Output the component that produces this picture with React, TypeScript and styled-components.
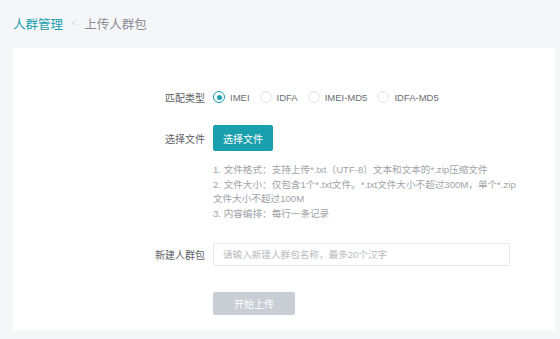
import React, { useState } from "react";
import styled, { createGlobalStyle } from "styled-components";

const GlobalStyle = createGlobalStyle`
  html, body {
    margin: 0;
    padding: 0;
    background: #f5f6f8;
    font-family: "Liberation Sans", "Noto Sans CJK SC", sans-serif;
  }
`;

const Page = styled.div`
  width: 560px;
  height: 339px;
  overflow: hidden;
  display: flex;
  flex-direction: column;
`;

const Breadcrumb = styled.div`
  height: 48px;
  display: flex;
  align-items: center;
  padding-left: 13px;
  font-size: 12.5px;
  gap: 6px;
  padding-bottom: 2px;
  box-sizing: border-box;
`;

const Crumb = styled.span<{ $active?: boolean }>`
  color: ${(p) => (p.$active ? "#1a9fad" : "#8a8d93")};
`;

const Sep = styled.span`
  color: #d3d5d9;
  font-size: 9px;
  margin: 0 2px;
`;

const Card = styled.div`
  flex: 1;
  margin: 0 5px 9px 13px;
  background: #fff;
  padding: 39px 0 0 112px;
  box-sizing: border-box;
`;

const Form = styled.div`
  display: grid;
  grid-template-columns: 80px 1fr;
  column-gap: 8px;
  align-items: center;
`;

const Label = styled.div`
  text-align: right;
  font-size: 10px;
  color: #5f6166;
`;

const RadioGroup = styled.div`
  display: flex;
  align-items: center;
  height: 20px;
  gap: 10px;
`;

const RadioItem = styled.label`
  display: flex;
  align-items: center;
  gap: 5px;
  font-size: 9.5px;
  color: #6b6e73;
  cursor: pointer;
`;

const Circle = styled.span<{ $checked?: boolean }>`
  width: 10px;
  height: 10px;
  border-radius: 50%;
  border: 1px solid ${(p) => (p.$checked ? "#1a9fad" : "#e2e4e8")};
  display: flex;
  align-items: center;
  justify-content: center;

  &::after {
    content: "";
    width: 5px;
    height: 5px;
    border-radius: 50%;
    background: ${(p) => (p.$checked ? "#1a9fad" : "transparent")};
  }
`;

const FileButton = styled.button`
  margin-top: 18px;
  width: 60px;
  height: 26px;
  border: none;
  border-radius: 2px;
  background: #1a9fad;
  color: #fff;
  font-family: inherit;
  font-size: 10px;
  padding: 0;
`;

const FileLabel = styled(Label)`
  margin-top: 18px;
`;

const Notes = styled.div`
  grid-column: 2;
  margin-top: 12px;
  font-size: 9.6px;
  line-height: 14.6px;
  color: #a0a3a8;
`;

const NameLabel = styled(Label)`
  margin-top: 22px;
`;

const NameInput = styled.input`
  margin-top: 22px;
  width: 297px;
  height: 23px;
  box-sizing: border-box;
  border: 1px solid #e6e8eb;
  border-radius: 2px;
  padding: 0 9px;
  font-family: inherit;
  font-size: 9.6px;
  outline: none;

  &::placeholder {
    color: #b8bbc0;
  }
`;

const SubmitButton = styled.button`
  grid-column: 2;
  margin-top: 26px;
  width: 82px;
  height: 23px;
  border: none;
  border-radius: 2px;
  background: #c9ced5;
  color: #fff;
  font-family: inherit;
  font-size: 10px;
  padding: 0;
`;

const types = ["IMEI", "IDFA", "IMEI-MD5", "IDFA-MD5"];

const App: React.FC = () => {
  const [type, setType] = useState("IMEI");

  return (
    <>
      <GlobalStyle />
      <Page>
        <Breadcrumb>
          <Crumb $active>人群管理</Crumb>
          <Sep>&lt;</Sep>
          <Crumb>上传人群包</Crumb>
        </Breadcrumb>
        <Card>
          <Form>
            <Label>匹配类型</Label>
            <RadioGroup>
              {types.map((t) => (
                <RadioItem key={t} onClick={() => setType(t)}>
                  <Circle $checked={type === t} />
                  {t}
                </RadioItem>
              ))}
            </RadioGroup>

            <FileLabel>选择文件</FileLabel>
            <div>
              <FileButton>选择文件</FileButton>
            </div>

            <Notes>
              1. 文件格式：支持上传*.txt（UTF-8）文本和文本的*.zip压缩文件
              <br />
              2. 文件大小：仅包含1个*.txt文件。*.txt文件大小不超过300M，单个*.zip
              <br />
              文件大小不超过100M
              <br />
              3. 内容编排：每行一条记录
            </Notes>

            <NameLabel>新建人群包</NameLabel>
            <div>
              <NameInput placeholder="请输入新建人群包名称，最多20个汉字" />
            </div>

            <SubmitButton>开始上传</SubmitButton>
          </Form>
        </Card>
      </Page>
    </>
  );
};

export default App;
